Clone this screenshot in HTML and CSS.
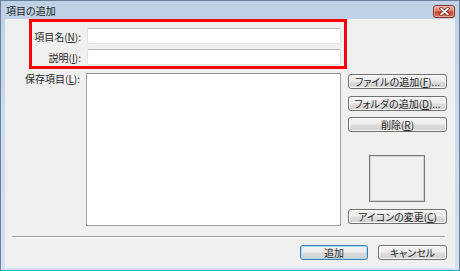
FILE: index.html
```html
<!DOCTYPE html>
<html lang="ja">
<head>
    <meta charset="UTF-8">
    <title>項目の追加</title>
    <link rel="stylesheet" href="styles.css">
</head>
<body>
    <div class="window">
        <div class="titlebar">
            <span class="title">項目の追加</span>
            <span class="close">
                <svg width="11" height="9" viewBox="0 0 11 9">
                    <path d="M2 1.5 L9 7.5 M9 1.5 L2 7.5" stroke="#6a2417" stroke-width="3.2" stroke-linecap="round"/>
                    <path d="M2 1.5 L9 7.5 M9 1.5 L2 7.5" stroke="#ffffff" stroke-width="1.7" stroke-linecap="round"/>
                </svg>
            </span>
        </div>

        <div class="client">
            <div class="highlight">
                <div class="field">
                    <span class="label">項目名(<u>N</u>):</span>
                    <div class="textbox"></div>
                </div>
                <div class="field">
                    <span class="label">説明(<u>I</u>):</span>
                    <div class="textbox"></div>
                </div>
            </div>

            <div class="main">
                <span class="list-label">保存項目(<u>L</u>):</span>
                <div class="listbox"></div>
                <div class="side">
                    <button class="btn first">ファイルの追加(<u>F</u>)...</button>
                    <button class="btn gap7">フォルダの追加(<u>D</u>)...</button>
                    <button class="btn gap6">削除(<u>R</u>)</button>
                    <div class="icon-preview"></div>
                    <button class="btn gap7">アイコンの変更(<u>C</u>)</button>
                </div>
            </div>

            <div class="separator"></div>

            <div class="footer">
                <button class="btn default">追加</button>
                <button class="btn cancel">キャンセル</button>
            </div>
        </div>
    </div>
</body>
</html>
```

FILE: styles.css
```css
body {
    margin: 0;
    font-family: "Noto Sans CJK JP", "Liberation Sans", sans-serif;
    font-feature-settings: "palt";
    font-size: 10px;
    color: #262626;
    background: #ffffff;
}
.window {
    width: 460px;
    height: 271px;
    box-sizing: border-box;
    border: 1px solid #6a7f99;
    border-bottom-color: #2aa6c6;
    padding: 0 4px 2px 4px;
    background: linear-gradient(180deg, #bfd1e7 0%, #cbdaec 40%, #d3e0ef 100%);
}
.titlebar {
    height: 18px;
    display: flex;
    align-items: center;
    justify-content: space-between;
}
.title {
    margin-left: 1px;
    font-size: 10px;
    color: #1a1a1a;
}
.close {
    width: 22px;
    height: 13px;
    margin-right: 0;
    margin-top: 3px;
    box-sizing: border-box;
    border: 1px solid #7a3226;
    border-radius: 3px;
    background: linear-gradient(180deg, #eab3a4 0%, #dc7e68 45%, #c4412a 55%, #d77f62 100%);
    box-shadow: inset 0 0 0 1px rgba(255, 220, 210, 0.5);
    display: flex;
    align-items: center;
    justify-content: center;
}
.close svg { display: block; }
.client {
    height: 249px;
    background: #f0f0f0;
    display: flex;
    flex-direction: column;
}
.highlight {
    margin-left: 24px;
    width: 318px;
    height: 50px;
    box-sizing: border-box;
    border: 3px solid #ff0000;
    padding-top: 6px;
    display: flex;
    flex-direction: column;
    gap: 5px;
}
.field {
    display: flex;
    align-items: center;
    height: 16px;
}
.field .label {
    width: 55px;
    padding-right: 6px;
    box-sizing: border-box;
    text-align: right;
    white-space: nowrap;
}
.textbox {
    width: 254px;
    height: 16px;
    box-sizing: border-box;
    border: 1px solid #e0e4ea;
    border-top-color: #b5b8bf;
    border-radius: 2px;
    background: #ffffff;
}
.main {
    margin-top: 4px;
    height: 153px;
    display: flex;
}
.list-label {
    width: 81px;
    padding-right: 6px;
    box-sizing: border-box;
    text-align: right;
    white-space: nowrap;
    margin-top: -2px;
}
.listbox {
    width: 255px;
    height: 153px;
    box-sizing: border-box;
    border: 1px solid #a2a2a2;
    border-top-color: #8e8f8f;
    background: #ffffff;
}
.side {
    margin-left: 7px;
    width: 99px;
    display: flex;
    flex-direction: column;
}
.btn {
    height: 15px;
    padding: 0;
    box-sizing: border-box;
    border: 1px solid #707070;
    border-radius: 3px;
    background: linear-gradient(180deg, #f4f4f4 0%, #ececec 48%, #dedede 52%, #d0d0d0 100%);
    box-shadow: inset 0 0 0 1px #fbfbfb;
    font-family: inherit;
    font-feature-settings: "palt";
    font-size: 10px;
    line-height: 12px;
    color: #262626;
    white-space: nowrap;
}
.side .btn { width: 99px; }
.first { margin-top: 1px; }
.gap7 { margin-top: 7px; }
.gap6 { margin-top: 6px; }
.icon-preview {
    margin: 23px 0 0 21px;
    width: 56px;
    height: 47px;
    box-sizing: border-box;
    border: 1px solid #7a7a7a;
    box-shadow: inset 0 0 0 1px #d4d4d4;
}
.separator {
    margin: 10px 0 0 7px;
    width: 433px;
    height: 1px;
    background: #a0a0a0;
    border-bottom: 1px solid #ffffff;
}
.footer {
    margin-top: 7px;
    padding-right: 8px;
    display: flex;
    justify-content: flex-end;
    gap: 10px;
}
.default {
    width: 68px;
    border-color: #3c7fb1;
    box-shadow: inset 0 0 0 1px #a6dcf6;
}
.cancel { width: 69px; }
```
